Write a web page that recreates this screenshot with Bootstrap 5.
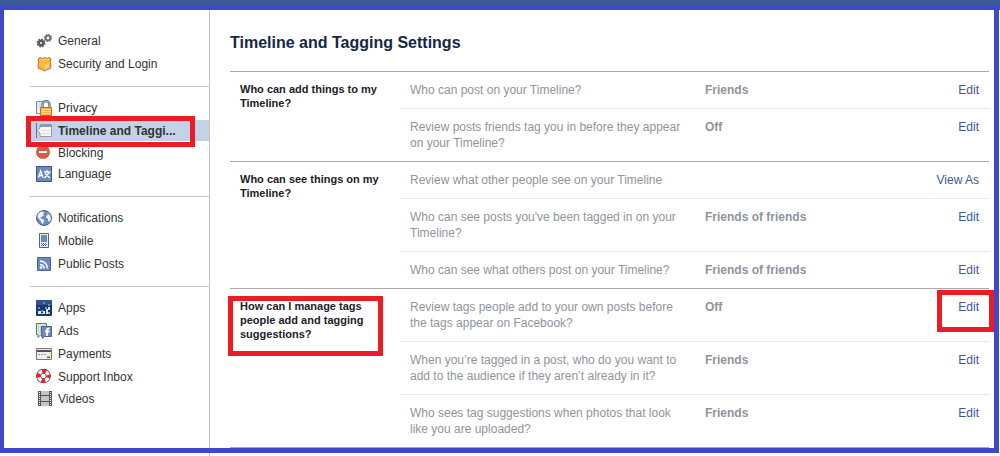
<!DOCTYPE html>
<html lang="en">
<head>
<meta charset="utf-8">
<meta name="viewport" content="width=device-width, initial-scale=1">
<title>Timeline and Tagging Settings</title>
<link href="https://cdn.jsdelivr.net/npm/bootstrap@5.3.0/dist/css/bootstrap.min.css" rel="stylesheet">
<style>
body { font-family: "Liberation Sans", Arial, sans-serif; font-size: 12px; line-height: 16px; color: #333; background: #fff; }
a { text-decoration: none; }
.topbar { height: 10px; background: #3b5998; }
.side { width: 210px; padding: 20px 0 0 30px; border-right: 1px solid #c4c4c4; }
.side ul { padding-bottom: 12px; margin-bottom: 10px; border-bottom: 1px solid #c4c4c4; }
.side ul:last-child { border-bottom: 0; margin-bottom: 0; }
.side li + li { margin-top: 2px; }
.side li + li.snug { margin-top: 1px; }
.side li + li.flush { margin-top: 0; }
.side a { height: 21px; padding-left: 6px; gap: 6px; color: #333; }
.side a.current { background: #c4d2e7; font-weight: bold; }
.side svg { width: 16px; height: 16px; flex: none; }
.content-area { padding: 21px 11px 0 20px; }
h1 { font-size: 16px; line-height: 24px; font-weight: bold; color: #162643; margin: 0 0 16px; }
.settings { border-collapse: separate; border-spacing: 0; border-bottom: 1px solid #aaa; }
.settings th, .settings td { padding: 10px; vertical-align: top; border-top: 1px solid #e9e9e9; }
.settings tbody tr:first-child > * { border-top-color: #aaa; }
.settings th { width: 170px; font-size: 11px; line-height: 14px; color: #1d2129; }
.settings td { color: #90949c; }
.settings .question { width: 295px; }
.settings .answer { font-weight: bold; }
.settings .action { text-align: right; }
.settings .action a { color: #3b5998; }
.outline { position: absolute; border: 5px solid #ed1c24; pointer-events: none; }
.outline-nav { left: -4px; top: -4px; width: 169px; height: 31px; }
.outline-label { left: -12px; top: -3px; width: 155px; height: 60px; }
.outline-edit { right: -15px; top: -9px; width: 57px; height: 42px; }
.frame { position: absolute; inset: 5px 1px 3px 0; border: 5px solid #3f48cc; border-left-width: 4px; pointer-events: none; }
</style>
</head>
<body>
<div class="position-relative min-vh-100 d-flex flex-column">
<header class="topbar"></header>
<div class="d-flex flex-grow-1">
<nav class="side flex-shrink-0" aria-label="Settings">
<ul class="list-unstyled">
<li><a href="#" class="d-flex align-items-center"><svg viewBox="0 0 16 16" aria-hidden="true"><circle cx="5" cy="10" r="2.300" fill="none" stroke="#5d5959" stroke-width="2.600"/><circle cx="5" cy="10" r="3.700" fill="none" stroke="#5d5959" stroke-width="1.600" stroke-dasharray="1.500 1.400"/><circle cx="12" cy="5" r="2.300" fill="none" stroke="#6b6868" stroke-width="1.800"/><circle cx="12" cy="5" r="3.500" fill="none" stroke="#777" stroke-width="1.400" stroke-dasharray="1.350 1.400"/></svg>General</a></li>
<li><a href="#" class="d-flex align-items-center"><svg viewBox="0 0 16 16" aria-hidden="true"><path d="M2 3 4 1.500 6 2.500 8.500 1.500 11 2.500 13 1.500 15 3 14 6 15 9.500 14.500 12.500 11 13.500 8.500 15 6 13.500 2.500 12.500 2 9.500 3 6z" fill="#fbb83c" stroke="#b87332"/><path d="M4 3 6 4 8.500 3 11 4 13 3" fill="none" stroke="#ffd474"/><path d="M13 7v4l-4 3V9z" fill="#ffd17b"/></svg>Security and Login</a></li>
</ul>
<ul class="list-unstyled">
<li><a href="#" class="d-flex align-items-center"><svg viewBox="0 0 16 16" aria-hidden="true"><path d="M.5 1.500h6v12h-6z" fill="#eef2f8" stroke="#6d89bb"/><path d="M2 4h3M2 6h3M2 8h2" stroke="#c9d5e9"/><path d="M6.500 8V4.500a3.500 3.500 0 0 1 7 0V8" fill="none" stroke="#666" stroke-width="2.400"/><path d="M6.500 7V4.500a3.500 3.500 0 0 1 7 0V7" fill="none" stroke="#ccc" stroke-width=".8"/><path d="M4.500 7.500h11v8h-11z" fill="#f6b44b" stroke="#b3702e"/><path d="M5 9.500h10M5 11.500h10M5 13.500h10" stroke="#ffd88f"/></svg>Privacy</a></li>
<li class="position-relative"><a href="#" class="d-flex align-items-center current" aria-current="page"><svg viewBox="0 0 16 16" aria-hidden="true"><path d="M.5 0v15" stroke="#5876ae"/><path d="M4 1.500h11.500v12H4V10L1.500 7.500 4 5z" fill="#f8f8f8" stroke="#999"/><path d="M4 2h11v2H4z" fill="#8398bd"/><path d="M6 7.500h8M6 10.500h8" stroke="#ddd"/></svg><span>Timeline and Taggi...</span></a><span class="outline outline-nav"></span></li>
<li class="snug"><a href="#" class="d-flex align-items-center"><svg viewBox="0 0 16 16" aria-hidden="true"><circle cx="7" cy="7" r="7" fill="#d45d43"/><path d="M3 6h8v2H3z" fill="#fff"/></svg>Blocking</a></li>
<li class="flush"><a href="#" class="d-flex align-items-center"><svg viewBox="0 0 16 16" aria-hidden="true"><path d="M.5.5h15v15H.5z" fill="#6d88bb" stroke="#3b5998"/><path d="M2.500 11.500 4.700 5 7 11.500M3.300 9.500h3M8 6h6.500M11.200 4v2M9 7.500 14 12M13.400 6.500 8.400 12" fill="none" stroke="#fff" stroke-width="1.400"/></svg>Language</a></li>
</ul>
<ul class="list-unstyled">
<li><a href="#" class="d-flex align-items-center"><svg viewBox="0 0 16 16" aria-hidden="true"><circle cx="8" cy="8" r="7.500" fill="#6d88bb" stroke="#48659f"/><path d="M2 4 5 1.500 8.500 2 7 4 8 5.500 5.500 7 4 7.500 6 9 8.500 10 7.500 12.500 6.500 14.500 5 11.500 3 9 1.500 7zM11 3l3 2 1 4-1.500 3-1.500-1V9L10 7.500 10.500 5.500 12 5z" fill="#eef2f8"/></svg>Notifications</a></li>
<li><a href="#" class="d-flex align-items-center"><svg viewBox="0 0 16 16" aria-hidden="true"><path d="M3.500.5h9v14h-9z" fill="#e9eef6" stroke="#48659f"/><path d="M5 2h6v7H5z" fill="#6d88bb"/><path d="M5 10.500h6M5 12.500h6" stroke="#48659f" stroke-dasharray="1 1"/><path d="M6 11.500h5" stroke="#48659f" stroke-dasharray="1 1"/></svg>Mobile</a></li>
<li><a href="#" class="d-flex align-items-center"><svg viewBox="0 0 16 16" aria-hidden="true"><path d="M1.500 1.500h13v13h-13z" fill="#6d88bb" stroke="#48659f"/><path d="M4 8.500a4 4 0 0 1 4 4M4 5a7.500 7.500 0 0 1 7.500 7.500" fill="none" stroke="#fff" stroke-width="1.600"/><circle cx="5" cy="11.500" r="1.200" fill="#fff"/></svg>Public Posts</a></li>
</ul>
<ul class="list-unstyled">
<li><a href="#" class="d-flex align-items-center"><svg viewBox="0 0 16 16" aria-hidden="true"><rect width="16" height="16" rx="1" fill="#1d3768"/><path d="M0 0h16v5H0z" fill="#30548d"/><path d="M2 7h2v2H2zM7 2h2v2H7zM12 4h2v2h-2zM5 10h2v2H5zM9 7h2v2H9z" fill="#5990cf"/><path d="M2 11h3v3H2zM7 11h2v3H7zM10 9h2v5h-2zM12 7h2v3h-2z" fill="#d5e9fa"/><path d="M5 13h2v1H5zM12 12h2v2h-2z" fill="#8bb9e3"/></svg>Apps</a></li>
<li><a href="#" class="d-flex align-items-center"><svg viewBox="0 0 16 16" aria-hidden="true"><path d="M.5.500h10v11H5l-3 3v-3H.5z" fill="#e2e2e2" stroke="#41932f"/><path d="M2 3h7M2 5h3M2 7h3M2 9h3" stroke="#bbb" stroke-dasharray="1 1"/><path d="M5.500 3.500h10v10h-7L6.500 15.500v-2h-1z" fill="#6d88bb" stroke="#48659f"/><path d="M13.500 5.500h-1q-1.500 0-1.500 1.500v6M9 8.500h4.500" fill="none" stroke="#fff" stroke-width="1.800"/></svg>Ads</a></li>
<li><a href="#" class="d-flex align-items-center"><svg viewBox="0 0 16 16" aria-hidden="true"><path d="M.5 2.500h15v11H.5z" fill="#eee" stroke="#777"/><path d="M1 4h14v2H1z" fill="#544f50"/><path d="M2 8.500h9" stroke="#999" stroke-dasharray="2 1"/><path d="M11 10h3v1h-3z" fill="#f2b133"/><path d="M11 11h3v1h-3z" fill="#3b58a8"/></svg>Payments</a></li>
<li><a href="#" class="d-flex align-items-center"><svg viewBox="0 0 16 16" aria-hidden="true"><circle cx="7.500" cy="7" r="4.800" fill="none" stroke="#444" stroke-width="5"/><circle cx="7.500" cy="7" r="4.800" fill="none" stroke="#fff" stroke-width="3.600"/><circle cx="7.500" cy="7" r="4.800" fill="none" stroke="#ee1c1f" stroke-width="4.200" stroke-dasharray="3.770 3.770" stroke-dashoffset="1.880"/></svg>Support Inbox</a></li>
<li class="snug"><a href="#" class="d-flex align-items-center"><svg viewBox="0 0 16 16" aria-hidden="true"><path d="M2 0h14v15H2z" fill="#595453"/><path d="M5 0h8v4H5zM5 5h8v5H5zM5 11h8v4H5z" fill="#c8c3be"/><path d="M3.500 1v14M14.500 1v14" stroke="#fff" stroke-dasharray="1 1"/></svg>Videos</a></li>
</ul>
</nav>
<main class="content-area flex-grow-1">
<h1>Timeline and Tagging Settings</h1>
<table class="settings w-100">
<tbody>
<tr><th scope="rowgroup" rowspan="2">Who can add things to my Timeline?</th><td class="question">Who can post on your Timeline?</td><td class="answer">Friends</td><td class="action"><a href="#">Edit</a></td></tr>
<tr><td class="question">Review posts friends tag you in before they appear on your Timeline?</td><td class="answer">Off</td><td class="action"><a href="#">Edit</a></td></tr>
</tbody>
<tbody>
<tr><th scope="rowgroup" rowspan="3">Who can see things on my Timeline?</th><td class="question">Review what other people see on your Timeline</td><td class="answer"></td><td class="action"><a href="#">View As</a></td></tr>
<tr><td class="question">Who can see posts you've been tagged in on your Timeline?</td><td class="answer">Friends of friends</td><td class="action"><a href="#">Edit</a></td></tr>
<tr><td class="question">Who can see what others post on your Timeline?</td><td class="answer">Friends of friends</td><td class="action"><a href="#">Edit</a></td></tr>
</tbody>
<tbody>
<tr><th scope="rowgroup" rowspan="3"><div class="position-relative">How can I manage tags people add and tagging suggestions?<span class="outline outline-label"></span></div></th><td class="question">Review tags people add to your own posts before the tags appear on Facebook?</td><td class="answer">Off</td><td class="action"><div class="position-relative"><a href="#">Edit</a><span class="outline outline-edit"></span></div></td></tr>
<tr><td class="question">When you’re tagged in a post, who do you want to add to the audience if they aren’t already in it?</td><td class="answer">Friends</td><td class="action"><a href="#">Edit</a></td></tr>
<tr><td class="question">Who sees tag suggestions when photos that look like you are uploaded?</td><td class="answer">Friends</td><td class="action"><a href="#">Edit</a></td></tr>
</tbody>
</table>
</main>
</div>
<div class="frame"></div>
</div>
<script src="https://cdn.jsdelivr.net/npm/bootstrap@5.3.0/dist/js/bootstrap.bundle.min.js"></script>
</body>
</html>
